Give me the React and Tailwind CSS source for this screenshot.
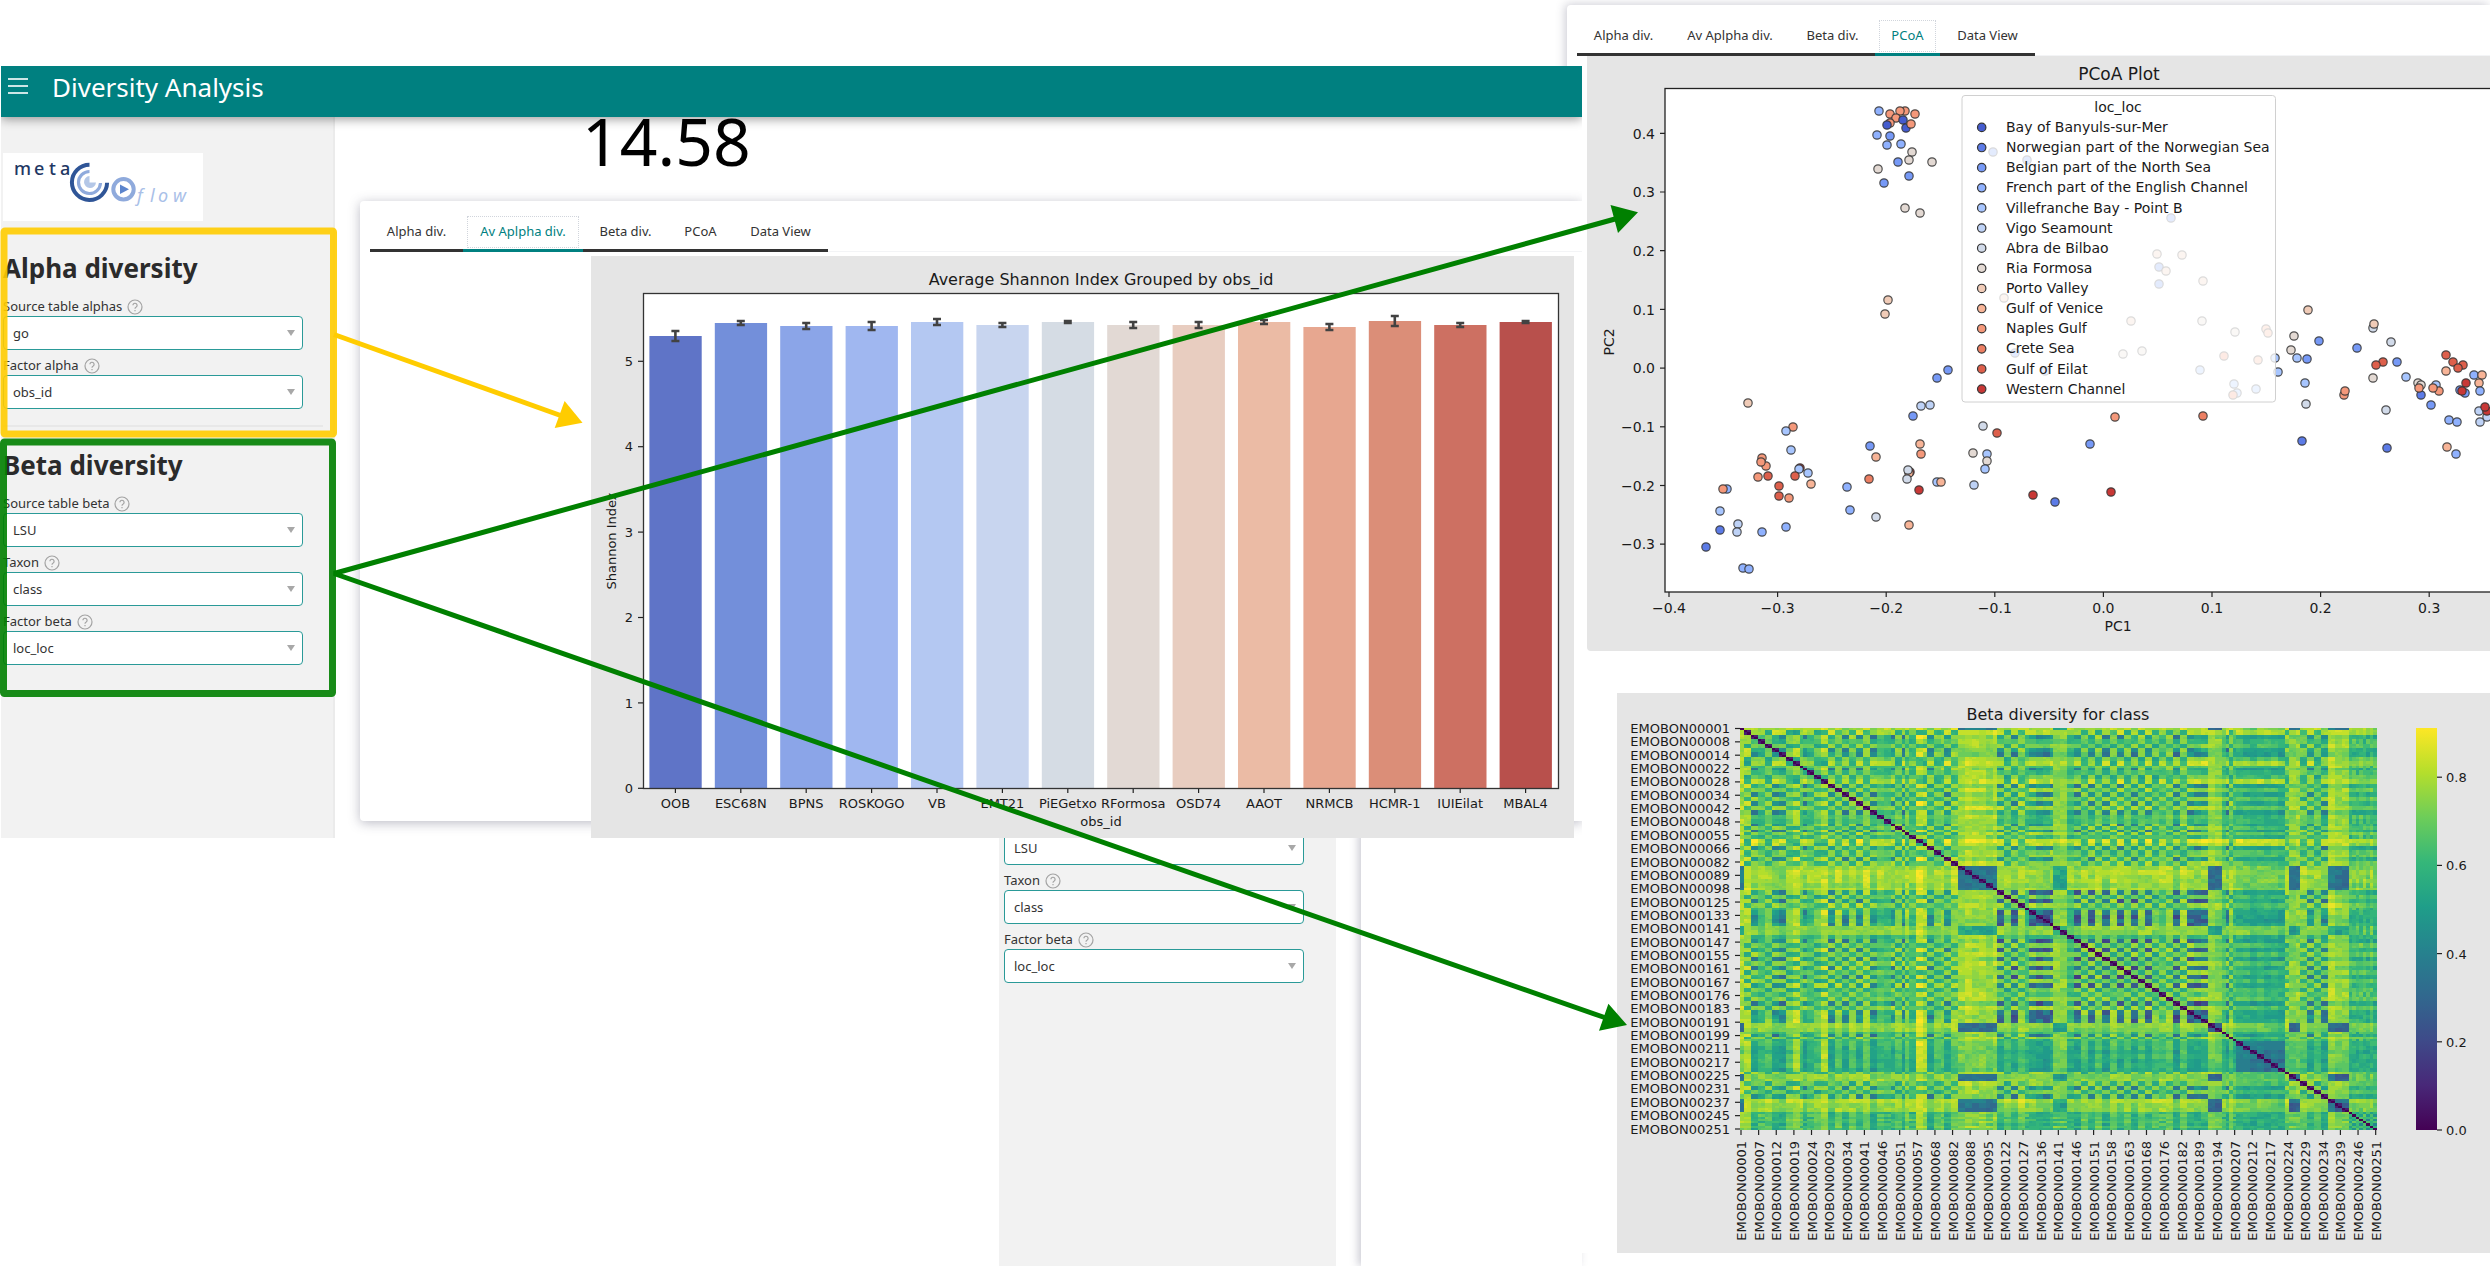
import React from 'react'

const tabs = [
  { label: 'Alpha div.', width: 'w-[93px]' },
  { label: 'Av Aplpha div.', width: 'w-[120px]' },
  { label: 'Beta div.', width: 'w-[85px]' },
  { label: 'PCoA', width: 'w-[65px]' },
  { label: 'Data View', width: 'w-[95px]' },
]

const bars = [
  { id: 'OOB', top: 336, err: 5, color: '#5f74c7' },
  { id: 'ESC68N', top: 323, err: 2, color: '#738fda' },
  { id: 'BPNS', top: 326, err: 3, color: '#8ba5e8' },
  { id: 'ROSKOGO', top: 326, err: 4, color: '#a0b7f0' },
  { id: 'VB', top: 322, err: 3, color: '#b4c8f2' },
  { id: 'EMT21', top: 325, err: 2, color: '#c8d5ef' },
  { id: 'PiEGetxo', top: 322, err: 1, color: '#d5dce4' },
  { id: 'RFormosa', top: 325, err: 3, color: '#e2d9d4' },
  { id: 'OSD74', top: 325, err: 3, color: '#e8cdc0' },
  { id: 'AAOT', top: 322, err: 2, color: '#ebbba5' },
  { id: 'NRMCB', top: 327, err: 3, color: '#e7a790' },
  { id: 'HCMR-1', top: 321, err: 5, color: '#db8e78' },
  { id: 'IUIEilat', top: 325, err: 2, color: '#cd7062' },
  { id: 'MBAL4', top: 322, err: 1, color: '#b8504c' },
]

const locations = [
  { name: 'Bay of Banyuls-sur-Mer', color: '#455cce' },
  { name: 'Norwegian part of the Norwegian Sea', color: '#5c7be6' },
  { name: 'Belgian part of the North Sea', color: '#7699f6' },
  { name: 'French part of the English Channel', color: '#8fb1fe' },
  { name: 'Villefranche Bay - Point B', color: '#a7c5fe' },
  { name: 'Vigo Seamount', color: '#bed2f6' },
  { name: 'Abra de Bilbao', color: '#d1dae9' },
  { name: 'Ria Formosa', color: '#e3d9d3' },
  { name: 'Porto Valley', color: '#f0cbb7' },
  { name: 'Gulf of Venice', color: '#f7b497' },
  { name: 'Naples Gulf', color: '#f4987a' },
  { name: 'Crete Sea', color: '#ec7f63' },
  { name: 'Gulf of Eilat', color: '#dd5f4b' },
  { name: 'Western Channel', color: '#c83836' },
]

// x, y, index into locations
const points = [
  [1879, 111, 3], [1905, 111, 10], [1900, 111, 10], [1890, 114, 10], [1915, 114, 10], [1896, 118, 10],
  [1890, 123, 10], [1903, 120, 0], [1887, 125, 0], [1906, 128, 0], [1911, 124, 10], [1877, 135, 3],
  [1890, 136, 2], [1887, 145, 3], [1901, 144, 3], [1912, 152, 7], [1909, 160, 7], [1932, 162, 7],
  [1898, 162, 2], [1878, 169, 7], [1909, 176, 2], [1884, 183, 2], [1905, 208, 7], [1920, 213, 7],
  [1888, 300, 8], [1885, 314, 8], [1948, 370, 2], [1937, 378, 2], [1748, 403, 8], [1930, 405, 5],
  [1921, 406, 5], [1913, 416, 2], [1993, 152, 2], [2027, 160, 2], [2004, 298, 8], [2015, 353, 2],
  [2045, 371, 3], [2171, 218, 2], [2157, 254, 8], [2182, 255, 8], [2159, 267, 2], [2166, 271, 8],
  [2159, 284, 2], [2203, 281, 8], [2131, 321, 8], [2202, 321, 7], [2235, 332, 7], [2266, 329, 9],
  [2268, 333, 9], [2123, 354, 7], [2142, 351, 7], [2224, 356, 10], [2258, 360, 9], [2200, 370, 4],
  [2234, 384, 4], [2237, 393, 4], [2256, 389, 4], [2233, 395, 10], [2275, 358, 4], [2278, 372, 4],
  [2308, 310, 8], [2294, 336, 7], [2319, 341, 2], [2291, 350, 7], [2297, 358, 4], [2307, 359, 2],
  [2305, 383, 4], [2306, 404, 6], [2357, 348, 2], [2373, 328, 6], [2374, 324, 8], [2391, 342, 6],
  [2383, 362, 12], [2376, 365, 12], [2397, 362, 2], [2373, 378, 7], [2406, 377, 4], [2344, 395, 10],
  [2345, 391, 10], [2386, 410, 6], [2418, 383, 7], [2421, 385, 7], [2421, 395, 1], [2419, 388, 10],
  [2431, 405, 2], [2436, 385, 4], [2439, 391, 10], [2433, 388, 10], [2446, 355, 12], [2453, 362, 12],
  [2463, 365, 12], [2458, 368, 12], [2446, 371, 9], [2474, 375, 3], [2482, 375, 9], [2479, 383, 9],
  [2480, 391, 3], [2460, 390, 2], [2465, 393, 2], [2466, 383, 13], [2462, 391, 13], [2449, 420, 3],
  [2457, 422, 3], [2479, 411, 5], [2487, 417, 5], [2480, 422, 5], [2487, 411, 13], [2485, 407, 13],
  [2447, 447, 9], [2456, 454, 3], [2302, 441, 1], [2387, 448, 1], [2115, 417, 10], [2203, 416, 11],
  [1997, 433, 12], [2090, 444, 2], [1793, 427, 10], [1786, 431, 4], [1791, 450, 4], [1762, 458, 10],
  [1766, 466, 10], [1761, 462, 10], [1758, 477, 10], [1768, 476, 12], [1800, 468, 13], [1799, 469, 4],
  [1808, 473, 4], [1795, 476, 12], [1811, 484, 9], [1779, 486, 12], [1779, 496, 12], [1789, 498, 10],
  [1727, 489, 3], [1723, 489, 10], [1720, 511, 4], [1738, 524, 5], [1737, 532, 5], [1720, 530, 1],
  [1706, 547, 1], [1762, 532, 3], [1786, 527, 3], [1743, 568, 3], [1749, 569, 3], [1870, 446, 2],
  [1876, 457, 9], [1920, 444, 9], [1921, 454, 10], [1869, 479, 11], [1847, 487, 3], [1850, 510, 3],
  [1876, 517, 6], [1909, 525, 9], [1910, 472, 13], [1909, 473, 9], [1908, 470, 6], [1907, 479, 6],
  [1919, 490, 13], [1937, 482, 4], [1941, 482, 9], [1983, 426, 6], [1973, 453, 7], [1987, 454, 4],
  [1987, 461, 7], [1985, 469, 4], [1974, 485, 5], [2033, 495, 13], [2055, 502, 1], [2111, 492, 13],
]

const rowIds = [
  1, 8, 14, 22, 28, 34, 42, 48, 55, 66, 82, 89, 98, 125, 133, 141, 147, 155, 161, 167, 176, 183, 191,
  199, 211, 217, 225, 231, 237, 245, 251,
]

const columnIds = [
  1, 7, 12, 19, 24, 29, 34, 41, 46, 51, 57, 68, 82, 88, 95, 122, 127, 136, 141, 146, 151, 158, 163,
  168, 176, 182, 189, 194, 207, 212, 217, 224, 229, 234, 239, 246, 251,
]

const sampleName = (id) => `EMOBON${String(id).padStart(5, '0')}`

// Runs of samples of one kind: [kind, count]
const sampleRuns = [
  ['S', 1], ['Y', 2], ['A', 2], ['m', 2], ['B', 2], ['A', 4], ['B', 2], ['Y', 2], ['m', 1], ['A', 1],
  ['m', 2], ['B', 2], ['Y', 2], ['A', 2], ['B', 2], ['A', 2], ['B', 2], ['A', 2], ['B', 2], ['A', 2],
  ['m', 4], ['A', 1], ['B', 2], ['A', 1], ['B', 1], ['m', 2], ['Y', 3], ['A', 2], ['B', 3], ['A', 2],
  ['B', 2], ['S', 11], ['A', 2], ['B', 2], ['A', 2], ['B', 2], ['m', 1], ['A', 7], ['s', 4], ['m', 2],
  ['A', 2], ['B', 2], ['A', 2], ['B', 2], ['A', 2], ['B', 2], ['A', 2], ['B', 2], ['A', 2], ['B', 2],
  ['A', 2], ['B', 2], ['m', 2], ['B', 2], ['A', 2], ['B', 2], ['A', 6], ['S', 4], ['m', 1], ['A', 1],
  ['B', 1], ['m', 1], ['M', 14], ['B', 1], ['S', 3], ['B', 2], ['A', 2], ['B', 2], ['A', 2], ['S', 6],
  ['m', 1], ['N', 1], ['m', 1], ['N', 1], ['m', 1], ['N', 1], ['m', 1], ['N', 1],
]

const distances = {
  SS: 0.34, Ss: 0.52, SA: 0.74, SB: 0.79, SY: 0.84, Sm: 0.77, SM: 0.7, SN: 0.7,
  ss: 0.55, sA: 0.74, sB: 0.75, sY: 0.8, sm: 0.72, sM: 0.7, sN: 0.6,
  AA: 0.46, AB: 0.75, AY: 0.84, Am: 0.6, AM: 0.52, AN: 0.56,
  BB: 0.58, BY: 0.62, Bm: 0.7, BM: 0.64, BN: 0.68,
  YY: 0.6, Ym: 0.8, YM: 0.82, YN: 0.77,
  mm: 0.6, mM: 0.58, mN: 0.66,
  MM: 0.36, MN: 0.57,
  NN: 0.46,
}

const viridis = [
  [68, 1, 84], [72, 40, 120], [62, 74, 137], [49, 104, 142], [38, 130, 142], [31, 158, 137],
  [53, 183, 121], [109, 205, 89], [180, 222, 44], [253, 231, 37],
]

const SHADES = 36
const MAX_DISTANCE = 0.91

const shade = (t) => {
  const pos = Math.min(Math.max(t, 0), 1) * (viridis.length - 1)
  const low = Math.min(Math.floor(pos), viridis.length - 2)
  const rgb = viridis[low].map((v, k) => Math.round(v + (viridis[low + 1][k] - v) * (pos - low)))
  return `rgb(${rgb.join(',')})`
}

const noise = (a, b) => {
  const v = Math.sin(a * 127.1 + b * 311.7 + 17) * 43758.5453
  return (v - Math.floor(v)) * 2 - 1
}

const buildHeatmap = () => {
  const samples = []
  sampleRuns.forEach(([kind, count]) => {
    for (let k = 0; k < count; k += 1) {
      samples.push({ kind, pair: samples.length + (k % 2 ? -1 : 0) })
    }
  })

  const distance = (i, j) => {
    if (i === j) return 0
    const [lo, hi] = i < j ? [i, j] : [j, i]
    const a = samples[lo]
    const b = samples[hi]
    if (a.pair === b.pair) return 0.08
    let d = distances[a.kind + b.kind] ?? distances[b.kind + a.kind]
    if (a.kind === 'A' && b.kind === 'A') {
      if (lo > 72 && hi < 133) d -= 0.16
      d += noise(a.pair, b.pair) * 0.08
    }
    d += (noise(a.pair, 3) + noise(b.pair, 3)) * 0.03
    d += noise(a.pair, b.pair) * 0.045 + noise(lo, hi) * 0.012
    return Math.min(d, MAX_DISTANCE)
  }

  const paths = Array.from({ length: SHADES }, () => '')
  samples.forEach((_, row) => {
    let start = 0
    let current = -1
    for (let col = 0; col <= samples.length; col += 1) {
      const next =
        col < samples.length ? Math.round((distance(row, col) / MAX_DISTANCE) * (SHADES - 1)) : -1
      if (next !== current) {
        if (current >= 0) paths[current] += `M${start} ${row}h${col - start}v1h${start - col}z`
        start = col
        current = next
      }
    }
  })
  return { size: samples.length, paths }
}

const heatmap = buildHeatmap()

const Tabs = ({ active }) => (
  <div className="flex pl-[10px] pt-[14px]">
    <div role="tablist" className="flex">
      {tabs.map((tab) => (
        <button
          key={tab.label}
          type="button"
          role="tab"
          aria-selected={tab.label === active}
          className={`${tab.width} h-[37px] border-b-[3px] px-1 text-[13px] whitespace-nowrap ${
            tab.label === active ? 'border-[#008080] text-[#008080]' : 'border-[#333] text-[#333]'
          }`}
        >
          <span
            className={`flex h-8 items-center justify-center border border-dotted ${
              tab.label === active ? 'border-gray-300' : 'border-transparent'
            }`}
          >
            {tab.label}
          </span>
        </button>
      ))}
    </div>
    <div className="flex-1 border-b border-gray-100" />
  </div>
)

const HelpIcon = () => (
  <svg viewBox="0 0 16 16" className="size-4" fill="none" stroke="#a3a3a3" strokeWidth="1.2">
    <circle cx="8" cy="8" r="7" />
    <path d="M5.9 6.3a2.1 2.1 0 1 1 3.3 1.8c-.8.5-1.2.8-1.2 1.7" />
    <path d="M8 11v1.3" />
  </svg>
)

const Field = ({ id, label, value }) => (
  <div className="w-[300px]">
    {label && (
      <div className="flex h-[25px] items-center gap-[5px] pt-[7px] text-[13px] text-[#333]">
        <label htmlFor={id}>{label}</label>
        <HelpIcon />
      </div>
    )}
    <div className="relative">
      <select
        id={id}
        aria-label={label ? undefined : 'Source table'}
        defaultValue={value}
        className="block h-[34px] w-full appearance-none rounded border border-[#2a9a98] bg-white pt-0.5 pl-[9px] text-[13px] text-[#333]"
      >
        <option>{value}</option>
      </select>
      <svg viewBox="0 0 8 6" className="pointer-events-none absolute top-[14px] right-[8px] h-1.5 w-2">
        <path d="M0 0h8L4 6z" fill="#a8a8a8" />
      </svg>
    </div>
  </div>
)

const Logo = () => (
  <svg viewBox="3 153 200 68" className="h-[68px] w-[200px] bg-white" fontFamily="Noto Sans, sans-serif">
    <text x="14 34 49 60" y="175" fontSize="18" fontWeight="500" fill="#1f3864">meta</text>
    <text x="137 150 158 173" y="202" fontSize="18" fontStyle="italic" fill="#a9c0e8">flow</text>
    <g fill="none">
      <path d="M89.5 164.8a17.6 17.6 0 1 0 17.6 18" stroke="#2f5597" strokeWidth="4" />
      <path d="M89.5 171.5a11 11 0 1 0 11 11.5" stroke="#8faadc" strokeWidth="3.2" />
      <circle cx="123.5" cy="189.3" r="10.2" stroke="#8faadc" strokeWidth="4" />
    </g>
    <path d="M89.5 182.5v-6.5a6 6 0 1 0 6.5 6.5z" fill="#b4c7e7" />
    <path d="M120 184.5l9 4.8-9 4.8z" fill="#5b84cc" />
  </svg>
)

const BarChart = () => (
  <svg
    viewBox="591 256 983 582"
    className="block w-full bg-[#e5e5e5]"
    fontFamily="DejaVu Sans, sans-serif"
    fontSize="13"
    fill="#1a1a1a"
  >
    <rect x="643.5" y="293.5" width="915" height="495" fill="#fff" />
    {bars.map((bar, i) => {
      const cx = 675.4 + i * 65.4
      return (
        <g key={bar.id}>
          <rect x={cx - 26} y={bar.top} width="52.3" height={788 - bar.top} fill={bar.color} />
          <path
            d={`M${cx} ${bar.top - bar.err}v${bar.err * 2}M${cx - 4} ${bar.top - bar.err}h8M${cx - 4} ${bar.top + bar.err}h8`}
            stroke="#424242"
            strokeWidth="2.6"
          />
          <path d={`M${cx} 788v5`} stroke="#222" strokeWidth="1.2" />
          <text x={cx} y="808" textAnchor="middle">{bar.id}</text>
        </g>
      )
    })}
    <rect x="643.5" y="293.5" width="915" height="495" fill="none" stroke="#333" strokeWidth="1.3" />
    {[0, 1, 2, 3, 4, 5].map((v) => (
      <g key={v}>
        <path d={`M643 ${788.3 - v * 85.4}h-5`} stroke="#222" strokeWidth="1.2" />
        <text x="633" y={793 - v * 85.4} textAnchor="end">{v}</text>
      </g>
    ))}
    <text x="1101" y="285" fontSize="16" textAnchor="middle">Average Shannon Index Grouped by obs_id</text>
    <text x="1101" y="826" textAnchor="middle">obs_id</text>
    <text transform="translate(616 541) rotate(-90)" textAnchor="middle">Shannon Index</text>
  </svg>
)

const PcoaChart = () => (
  <svg
    viewBox="1587 55 903 596"
    className="block h-[596px] w-[903px] rounded-bl bg-[#e5e5e5]"
    fontFamily="DejaVu Sans, sans-serif"
    fontSize="14"
    fill="#1a1a1a"
  >
    <rect x="1665" y="88.5" width="860" height="503.5" fill="#fff" stroke="#222" strokeWidth="1.3" />
    <g stroke="#333" strokeOpacity="0.85" strokeWidth="1.2">
      {points.map(([x, y, loc], i) => (
        <circle key={i} cx={x} cy={y} r="4.2" fill={locations[loc].color} />
      ))}
    </g>
    <rect x="1962" y="95.5" width="313.5" height="306.5" rx="3" fill="#fff" fillOpacity="0.8" stroke="#d0d0d0" />
    <text x="2118" y="112" textAnchor="middle">loc_loc</text>
    {locations.map((loc, i) => (
      <g key={loc.name}>
        <circle cx="1981.7" cy={127.4 + i * 20.13} r="4.2" fill={loc.color} stroke="#333" strokeWidth="1.2" />
        <text x="2006" y={132 + i * 20.13}>{loc.name}</text>
      </g>
    ))}
    {['−0.4', '−0.3', '−0.2', '−0.1', '0.0', '0.1', '0.2', '0.3'].map((label, i) => (
      <g key={label}>
        <path d={`M${1669 + i * 108.6} 592v5`} stroke="#222" strokeWidth="1.2" />
        <text x={1669 + i * 108.6} y="613" textAnchor="middle">{label}</text>
      </g>
    ))}
    {['0.4', '0.3', '0.2', '0.1', '0.0', '−0.1', '−0.2', '−0.3'].map((label, i) => (
      <g key={label}>
        <path d={`M1665 ${133.3 + i * 58.7}h-5`} stroke="#222" strokeWidth="1.2" />
        <text x="1655" y={138.5 + i * 58.7} textAnchor="end">{label}</text>
      </g>
    ))}
    <text x="2119" y="80" fontSize="17" textAnchor="middle">PCoA Plot</text>
    <text x="2118" y="631" textAnchor="middle">PC1</text>
    <text transform="translate(1614 342) rotate(-90)" textAnchor="middle">PC2</text>
  </svg>
)

const BetaHeatmap = () => (
  <svg
    viewBox="1617 693 873 560"
    className="block h-[560px] w-[873px] bg-[#e5e5e5]"
    fontFamily="DejaVu Sans, sans-serif"
    fontSize="13"
    fill="#1a1a1a"
  >
    <defs>
      <linearGradient id="viridis" x1="0" y1="1" x2="0" y2="0">
        {viridis.map((_, i) => (
          <stop key={i} offset={i / 9} stopColor={shade(i / 9)} />
        ))}
      </linearGradient>
    </defs>
    <text x="2058" y="720" fontSize="16" textAnchor="middle">Beta diversity for class</text>
    <svg
      x="1740"
      y="728"
      width="637"
      height="402"
      viewBox={`0 0 ${heatmap.size} ${heatmap.size}`}
      preserveAspectRatio="none"
      shapeRendering="crispEdges"
    >
      {heatmap.paths.map((d, i) => d && <path key={i} d={d} fill={shade(i / (SHADES - 1))} />)}
    </svg>
    {rowIds.map((id, i) => (
      <g key={id}>
        <path d={`M1740 ${728.5 + i * 13.35}h-5`} stroke="#222" strokeWidth="1.2" />
        <text x="1730" y={733 + i * 13.35} textAnchor="end">{sampleName(id)}</text>
      </g>
    ))}
    {columnIds.map((id, i) => (
      <g key={id}>
        <path d={`M${1741 + i * 17.63} 1130v5`} stroke="#222" strokeWidth="1.2" />
        <text transform={`translate(${1746 + i * 17.63} 1141) rotate(-90)`} textAnchor="end">
          {sampleName(id)}
        </text>
      </g>
    ))}
    <rect x="2416" y="728" width="21" height="402" fill="url(#viridis)" />
    {['0.0', '0.2', '0.4', '0.6', '0.8'].map((label, i) => (
      <g key={label}>
        <path d={`M2437 ${1130 - i * 88.2}h5`} stroke="#222" strokeWidth="1.2" />
        <text x="2446" y={1135 - i * 88.2}>{label}</text>
      </g>
    ))}
  </svg>
)

// Frames and arrows that link the settings to the plots they drive
const Annotations = () => (
  <svg
    viewBox="0 0 2490 1266"
    className="pointer-events-none absolute top-0 left-0 z-30 w-full"
    fill="none"
    strokeWidth="5"
    strokeLinejoin="bevel"
  >
    <rect x="4" y="231" width="329.5" height="203" rx="1" stroke="#ffcc00" strokeWidth="7" opacity="0.9" />
    <rect x="3.5" y="442" width="329" height="251.5" rx="1" stroke="#008000" strokeWidth="7" opacity="0.9" />
    <path d="M334 334.5L562 416" stroke="#ffcc00" />
    <path d="M582.5 422.7L564.6 401l-9.9 27z" fill="#ffcc00" />
    <path d="M1615 219L334 573.5 1606 1018" stroke="#008000" />
    <path d="M1638 212.3L1610.5 205l7.5 28zM1627 1025L1608.4 1003.7 1599 1030.7z" fill="#008000" />
  </svg>
)

const DiversityApp = () => (
  <section className="relative z-20 ml-px flex h-[772px] flex-col overflow-hidden bg-white">
    <header className="relative z-10 flex h-[51px] items-center bg-[#008080] pl-[7px] text-white shadow-[0_2px_10px_rgba(0,0,0,0.4)]">
      <button type="button" aria-label="Menu" className="mb-3 flex flex-col gap-[5px]">
        <span className="h-0.5 w-5 bg-white/80" />
        <span className="h-0.5 w-5 bg-white/80" />
        <span className="h-0.5 w-5 bg-white/80" />
      </button>
      <h1 className="mb-[9px] ml-6 text-[26px] leading-none">Diversity Analysis</h1>
    </header>
    <div className="flex min-h-0 flex-1">
      <aside className="w-[334px] shrink-0 border-r-2 border-[#ebebeb] bg-[#f2f2f2] pt-9 pl-0.5">
        <Logo />
        <h2 className="mt-6 text-[26px] leading-[46px] font-bold text-[#2b2b2b]">Alpha diversity</h2>
        <Field id="source-alpha" label="Source table alphas" value="go" />
        <Field id="factor-alpha" label="Factor alpha" value="obs_id" />
        <hr className="mt-4 mr-[10px] mb-[15px] border-t-2 border-[#e8e8e8]" />
        <h2 className="text-[26px] leading-[46px] font-bold text-[#2b2b2b]">Beta diversity</h2>
        <Field id="source-beta" label="Source table beta" value="LSU" />
        <Field id="taxon" label="Taxon" value="class" />
        <Field id="factor-beta" label="Factor beta" value="loc_loc" />
      </aside>
      <main className="min-w-0 flex-1 pl-[25px]">
        <p className="h-[84px] pl-[222px] text-[66px] leading-[46px] text-black">14.58</p>
        <div className="h-[620px] rounded-l bg-white shadow-[0_2px_12px_rgba(60,60,90,0.35)]">
          <Tabs active="Av Aplpha div." />
          <div className="mt-1 mr-2 ml-[231px]">
            <BarChart />
          </div>
        </div>
      </main>
    </div>
  </section>
)

const BackgroundApp = () => (
  <section className="-mt-[7px] flex flex-1 pl-[999px]">
    <div className="w-[337px] shrink-0 bg-[#f2f2f2] pl-[5px]">
      <Field id="back-source" value="LSU" />
      <Field id="back-taxon" label="Taxon" value="class" />
      <Field id="back-factor" label="Factor beta" value="loc_loc" />
    </div>
    <div className="ml-[25px] flex-1 bg-white shadow-[-3px_0_8px_rgba(60,60,90,0.25)]" />
  </section>
)

const App = () => (
  <div className="relative flex min-h-screen overflow-hidden bg-white font-['Noto_Sans',sans-serif]">
    <div className="relative z-10 flex min-w-0 flex-1 flex-col pt-[66px]">
      <DiversityApp />
      <BackgroundApp />
    </div>
    <div className="w-[908px] shrink-0">
      <section className="mt-[5px] -ml-[15px] rounded-tl bg-white shadow-[-2px_-1px_10px_rgba(60,60,90,0.25)]">
        <Tabs active="PCoA" />
        <div className="-mt-px ml-5">
          <PcoaChart />
        </div>
      </section>
      <section className="relative z-20 bg-white pt-[42px] pl-[35px]">
        <BetaHeatmap />
      </section>
    </div>
    <Annotations />
  </div>
)

export default App
